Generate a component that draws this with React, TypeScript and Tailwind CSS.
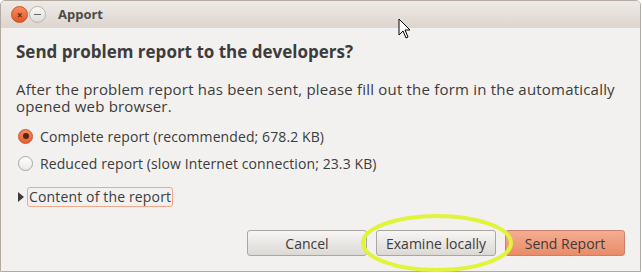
import React from 'react'

const font = { fontFamily: '"Open Sans", "DejaVu Sans", sans-serif' }

const Radio = ({ checked, label }: { checked?: boolean; label: string }) => (
    <div className="flex items-center h-[20px]">
        {checked ? (
            <span className="w-[15px] h-[15px] rounded-full border border-[#c8532b] bg-gradient-to-b from-[#f38b62] to-[#e5602f] flex items-center justify-center ml-[17px]">
                <span className="w-[6px] h-[6px] rounded-full bg-[#5a2413]" />
            </span>
        ) : (
            <span className="w-[15px] h-[15px] rounded-full border border-[#a9a6a1] bg-gradient-to-b from-[#ffffff] to-[#ebe9e6] ml-[17px]" />
        )}
        <span className="ml-[7px] text-[14px] tracking-[0.1px] text-[#3c3c3c]">{label}</span>
    </div>
)

const Button = ({ label, primary }: { label: string; primary?: boolean }) => (
    <button
        className={
            primary
                ? 'w-[120px] h-[26px] rounded-[3px] border border-[#c98168] bg-gradient-to-b from-[#f5ad92] to-[#ea8b68] text-[14px] text-[#3c3c3c]'
                : 'w-[120px] h-[26px] rounded-[3px] border border-[#aaa6a0] bg-gradient-to-b from-[#f7f6f5] to-[#dcd9d5] text-[14px] text-[#3c3c3c]'
        }
    >
        {label}
    </button>
)

const App = () => {
    return (
        <div className="relative w-[642px] h-[273px] bg-white overflow-hidden" style={font}>
            <div className="w-[641px] h-[272px] border border-[#b3aba2] rounded-t-[5px] bg-[#f2f1ef] flex flex-col overflow-hidden">
                <div className="h-[27px] bg-gradient-to-b from-[#edebe7] to-[#ddd5ce] flex items-center shrink-0">
                    <span className="ml-[10px] w-[17px] h-[17px] rounded-full bg-gradient-to-b from-[#f58d5f] to-[#e2561f] border border-[#c2552b] flex items-center justify-center text-[10px] leading-none text-[#5b2a17] font-bold">×</span>
                    <span className="ml-[1px] w-[17px] h-[17px] rounded-full bg-gradient-to-b from-[#fbfaf9] to-[#dedbd7] border border-[#b8b4ae] flex items-center justify-center">
                        <span className="w-[7px] h-[1px] bg-[#6d6a66]" />
                    </span>
                    <span className="ml-[12px] text-[13px] font-bold text-[#4d4b48]">Apport</span>
                </div>
                <div className="flex flex-col px-[15px]">
                    <div className="mt-[13px] text-[17px] leading-[22px] font-bold text-[#3c3c3c]">Send problem report to the developers?</div>
                    <div className="mt-[18px] flex flex-col text-[15px] leading-[17px] tracking-[0.2px] text-[#3c3c3c]">
                        <span>After the problem report has been sent, please fill out the form in the automatically</span>
                        <span>opened web browser.</span>
                    </div>
                    <div className="mt-[11px] flex flex-col gap-[7px] -ml-[15px]">
                        <Radio checked label="Complete report (recommended; 678.2 KB)" />
                        <Radio label="Reduced report (slow Internet connection; 23.3 KB)" />
                    </div>
                    <div className="mt-[14px] flex items-center h-[20px]">
                        <span className="ml-[2px] w-0 h-0 border-y-[5px] border-y-transparent border-l-[6px] border-l-[#3c3c3c]" />
                        <span className="ml-[3px] h-[20px] px-[1px] rounded-[3px] border border-[#f0a68a] text-[14px] leading-[18px] tracking-[0.15px] text-[#3c3c3c]">Content of the report</span>
                    </div>
                    <div className="mt-[23px] flex justify-end gap-[9px]">
                        <Button label="Cancel" />
                        <Button label="Examine locally" />
                        <Button label="Send Report" primary />
                    </div>
                </div>
            </div>
            <svg className="absolute left-[360px] top-[214px]" width="156" height="59" viewBox="0 0 156 59">
                <ellipse cx="77" cy="29" rx="74" ry="27" fill="none" stroke="#dff43a" strokeWidth="4" />
            </svg>
            <svg className="absolute left-[398px] top-[18px]" width="14" height="22" viewBox="0 0 14 22">
                <path d="M1 1 L1 17 L5 13 L8 20 L10 19 L7 12 L12 12 Z" fill="#fff" stroke="#000" strokeWidth="1" strokeLinejoin="round" />
            </svg>
        </div>
    )
}

export default App
